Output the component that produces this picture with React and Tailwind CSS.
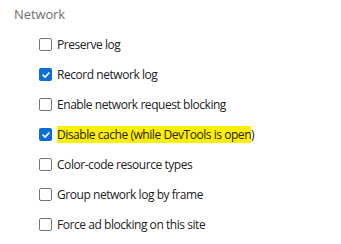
const items = [
  { label: "Preserve log", checked: false },
  { label: "Record network log", checked: true },
  { label: "Enable network request blocking", checked: false },
  { label: "Disable cache (while DevTools is open", tail: ")", checked: true, marked: true },
  { label: "Color-code resource types", checked: false },
  { label: "Group network log by frame", checked: false },
  { label: "Force ad blocking on this site", checked: false },
];

const Box = ({ checked }) =>
  checked ? (
    <span className="flex h-[13px] w-[13px] shrink-0 items-center justify-center rounded-[2px] bg-[#0b6ed8]">
      <svg viewBox="0 0 12 12" className="h-[10px] w-[10px]" fill="none" stroke="white" strokeWidth="2" strokeLinecap="round" strokeLinejoin="round">
        <path d="M2.5 6.2l2.4 2.4 4.6-5" />
      </svg>
    </span>
  ) : (
    <span className="h-[13px] w-[13px] shrink-0 rounded-[2px] border border-[#767676] bg-white" />
  );

export default function App() {
  return (
    <div className="h-[244px] w-[341px] bg-white font-['Open_Sans',sans-serif]">
      <div className="pl-[14px] pt-[5px] text-[13px] tracking-[-0.1px] text-[#6e6e6e]">Network</div>
      <div className="flex flex-col gap-[12px] pl-[39px] pt-[11px]">
        {items.map((it) => (
          <div key={it.label} className="flex h-[18px] items-center gap-[5px] text-[12px] tracking-[-0.45px] text-[#222]">
            <Box checked={it.checked} />
            <span>
              {it.marked ? <span className="bg-[#ffef00]">{it.label}</span> : it.label}
              {it.tail}
            </span>
          </div>
        ))}
      </div>
    </div>
  );
}
